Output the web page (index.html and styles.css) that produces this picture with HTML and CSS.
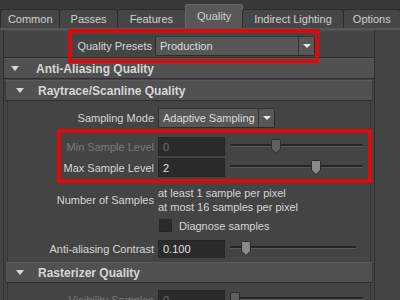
FILE: index.html
```html
<!DOCTYPE html>
<html lang="en">
<head>
    <meta charset="UTF-8">
    <title>Render Settings - Quality</title>
    <link rel="stylesheet" href="styles.css">
</head>
<body>
    <div class="tabs">
        <div class="tab t-common">Common</div>
        <div class="tab t-passes">Passes</div>
        <div class="tab t-features">Features</div>
        <div class="tab t-quality on">Quality</div>
        <div class="tab t-indirect">Indirect Lighting</div>
        <div class="tab t-options">Options</div>
    </div>

    <div class="panel">
        <div class="preset-row">
            <div class="preset mark">
                <span class="plabel">Quality Presets</span>
                <div class="combo combo-wide"><span class="ctext">Production</span><span class="carrow"><i></i></span></div>
            </div>
        </div>

        <div class="head head-top"><i class="tri"></i>Anti-Aliasing Quality</div>
        <div class="sub">
            <div class="head"><i class="tri"></i>Raytrace/Scanline Quality</div>
            <div class="body">
                <div class="row">
                    <label class="lbl">Sampling Mode</label>
                    <div class="combo combo-mode"><span class="ctext">Adaptive Sampling</span><span class="carrow"><i></i></span></div>
                </div>

                <div class="group mark">
                    <div class="row">
                        <label class="lbl off">Min Sample Level</label>
                        <div class="field off">0</div>
                        <div class="slider">
                            <div class="knob dim" style="left: 41px"><svg width="10" height="15" viewBox="0 0 10 15"><path d="M1.5 .5h7a1 1 0 0 1 1 1V10L5 14.5.5 10V1.5a1 1 0 0 1 1-1z"/></svg></div>
                        </div>
                    </div>
                    <div class="row">
                        <label class="lbl">Max Sample Level</label>
                        <div class="field">2</div>
                        <div class="slider">
                            <div class="knob" style="left: 81px"><svg width="10" height="15" viewBox="0 0 10 15"><path d="M1.5 .5h7a1 1 0 0 1 1 1V10L5 14.5.5 10V1.5a1 1 0 0 1 1-1z"/></svg></div>
                        </div>
                    </div>
                </div>

                <div class="row row-samples">
                    <label class="lbl">Number of Samples</label>
                    <div class="lines">
                        <div>at least 1 sample per pixel</div>
                        <div>at most 16 samples per pixel</div>
                    </div>
                </div>

                <div class="row row-check">
                    <span class="lbl"></span>
                    <span class="check"></span>
                    <span>Diagnose samples</span>
                </div>

                <div class="row row-contrast">
                    <label class="lbl">Anti-aliasing Contrast</label>
                    <div class="field">0.100</div>
                    <div class="slider short">
                        <div class="knob" style="left: 11px"><svg width="10" height="15" viewBox="0 0 10 15"><path d="M1.5 .5h7a1 1 0 0 1 1 1V10L5 14.5.5 10V1.5a1 1 0 0 1 1-1z"/></svg></div>
                    </div>
                </div>
            </div>

            <div class="head"><i class="tri"></i>Rasterizer Quality</div>
            <div class="body">
                <div class="row">
                    <label class="lbl off">Visibility Samples</label>
                    <div class="field off">0</div>
                    <div class="slider">
                        <div class="knob dim" style="left: 0px"><svg width="10" height="15" viewBox="0 0 10 15"><path d="M1.5 .5h7a1 1 0 0 1 1 1V10L5 14.5.5 10V1.5a1 1 0 0 1 1-1z"/></svg></div>
                    </div>
                </div>
            </div>
        </div>
    </div>
</body>
</html>
```

FILE: styles.css
```css
body {
    margin: 0;
    width: 400px;
    height: 300px;
    overflow: hidden;
    background-color: #444444;
    color: #d6d6d6;
    font-family: "Liberation Sans", Arial, sans-serif;
    font-size: 11px;
}

/* tab strip */
.tabs {
    display: flex;
    align-items: flex-end;
    height: 28px;
    background-color: #393939;
    border-bottom: 2px solid #575757;
}
.tab {
    box-sizing: border-box;
    height: 19px;
    line-height: 18px;
    text-align: center;
    white-space: nowrap;
    color: #d0d0d0;
    background-color: #464646;
    border: 1px solid #2b2b2b;
    border-bottom: none;
    border-radius: 3px 3px 0 0;
    margin-right: -1px;
}
.tab.on {
    height: 24px;
    line-height: 23px;
    background-color: #585858;
    border-color: #6a6a6a;
}
.t-common { width: 62px; }
.t-passes { width: 60px; }
.t-features { width: 71px; }
.t-quality { width: 60px; }
.t-indirect { width: 104px; }
.t-options { width: 60px; }

/* main panel */
.panel {
    margin-left: 3px;
    width: 372px;
    border-left: 1px solid #303030;
    border-right: 1px solid #303030;
    box-sizing: border-box;
}

.mark {
    position: relative;
    z-index: 1;
    outline: 4px solid #d80c0c;
}

.preset-row {
    height: 28px;
    background-color: #454545;
    border-top: 1px solid #4f4f4f;
    border-bottom: 1px solid #2c2c2c;
    box-sizing: border-box;
}
.preset {
    display: flex;
    align-items: center;
    margin: 2px 0 0 68px;
    width: 243px;
    height: 26px;
    box-sizing: border-box;
    padding-left: 4px;
}
.plabel {
    flex: 1;
    text-align: right;
    white-space: nowrap;
    margin-right: 3px;
}

/* combo boxes */
.combo {
    display: flex;
    flex-shrink: 0;
    box-sizing: border-box;
    height: 20px;
    background-color: #575757;
    border: 1px solid #2c2c2c;
    border-top-color: #333;
    border-radius: 2px;
    color: #dcdcdc;
}
.combo-wide { width: 160px; }
.combo-mode { width: 117px; }
.ctext {
    flex: 1;
    line-height: 18px;
    padding-left: 4px;
    white-space: nowrap;
    overflow: hidden;
}
.carrow {
    width: 15px;
    border-left: 1px solid #333;
    display: flex;
    align-items: center;
    justify-content: center;
}
.carrow i {
    width: 0;
    height: 0;
    border-left: 4px solid transparent;
    border-right: 4px solid transparent;
    border-top: 4px solid #e6e6e6;
}

/* section headers */
.head {
    box-sizing: border-box;
    height: 21px;
    display: flex;
    align-items: center;
    background-color: #515151;
    border-top: 1px solid #5a5a5a;
    border-bottom: 1px solid #2e2e2e;
    font-weight: bold;
    font-size: 12px;
    color: #d6d6d6;
    padding-left: 7px;
    white-space: nowrap;
}
.head .tri {
    width: 0;
    height: 0;
    border-left: 4px solid transparent;
    border-right: 4px solid transparent;
    border-top: 5px solid #d8d8d8;
    margin-right: 17px;
}
.sub {
    margin: 1px 1px 0 1px;
}
.sub .head {
    padding-left: 10px;
    border-left: 1px solid #3a3a3a;
    border-right: 1px solid #3a3a3a;
}
.sub .head .tri {
    margin-right: 14px;
}

.body {
    margin: 0 2px;
    border-left: 1px solid #333;
    border-right: 1px solid #333;
    padding: 6px 0 3px 0;
    background-color: #444;
}

/* rows */
.row {
    display: flex;
    align-items: center;
    height: 21px;
}
.lbl {
    width: 146px;
    text-align: right;
    margin-right: 4px;
    white-space: nowrap;
    flex-shrink: 0;
}
.off {
    color: #7a7a7a;
}

.group {
    margin: 5px 0 0 53px;
    width: 307px;
    padding: 3px 0 1px 0;
}
.group .lbl {
    width: 93px;
}

.field {
    box-sizing: border-box;
    flex-shrink: 0;
    width: 67px;
    height: 19px;
    line-height: 18px;
    padding-left: 4px;
    background-color: #2b2b2b;
    border: 1px solid #262626;
    color: #e0e0e0;
}
.field.off {
    color: #6c6c6c;
}

.slider {
    position: relative;
    width: 133px;
    height: 15px;
    margin-left: 5px;
}
.slider.short {
    width: 126px;
}
.slider::before {
    content: "";
    position: absolute;
    left: 0;
    right: 0;
    top: 5px;
    height: 2px;
    background-color: #262626;
    border-bottom: 1px solid #5a5a5a;
}
.knob {
    position: absolute;
    top: 0;
    width: 10px;
    height: 15px;
}
.knob svg {
    display: block;
}
.knob path {
    fill: #8a8a8a;
    stroke: #2a2a2a;
}
.knob.dim path {
    fill: #5f5f5f;
}

.row-samples {
    height: 28px;
    margin-top: 7px;
}
.lines {
    line-height: 14px;
}
.row-check {
    margin-top: 1px;
}
.check {
    width: 11px;
    height: 11px;
    background-color: #2b2b2b;
    border: 1px solid #262626;
    margin: 0 7px 0 1px;
}
.row-contrast {
    margin-top: 2px;
}
.row-contrast .field {
    height: 18px;
    line-height: 17px;
}
```
